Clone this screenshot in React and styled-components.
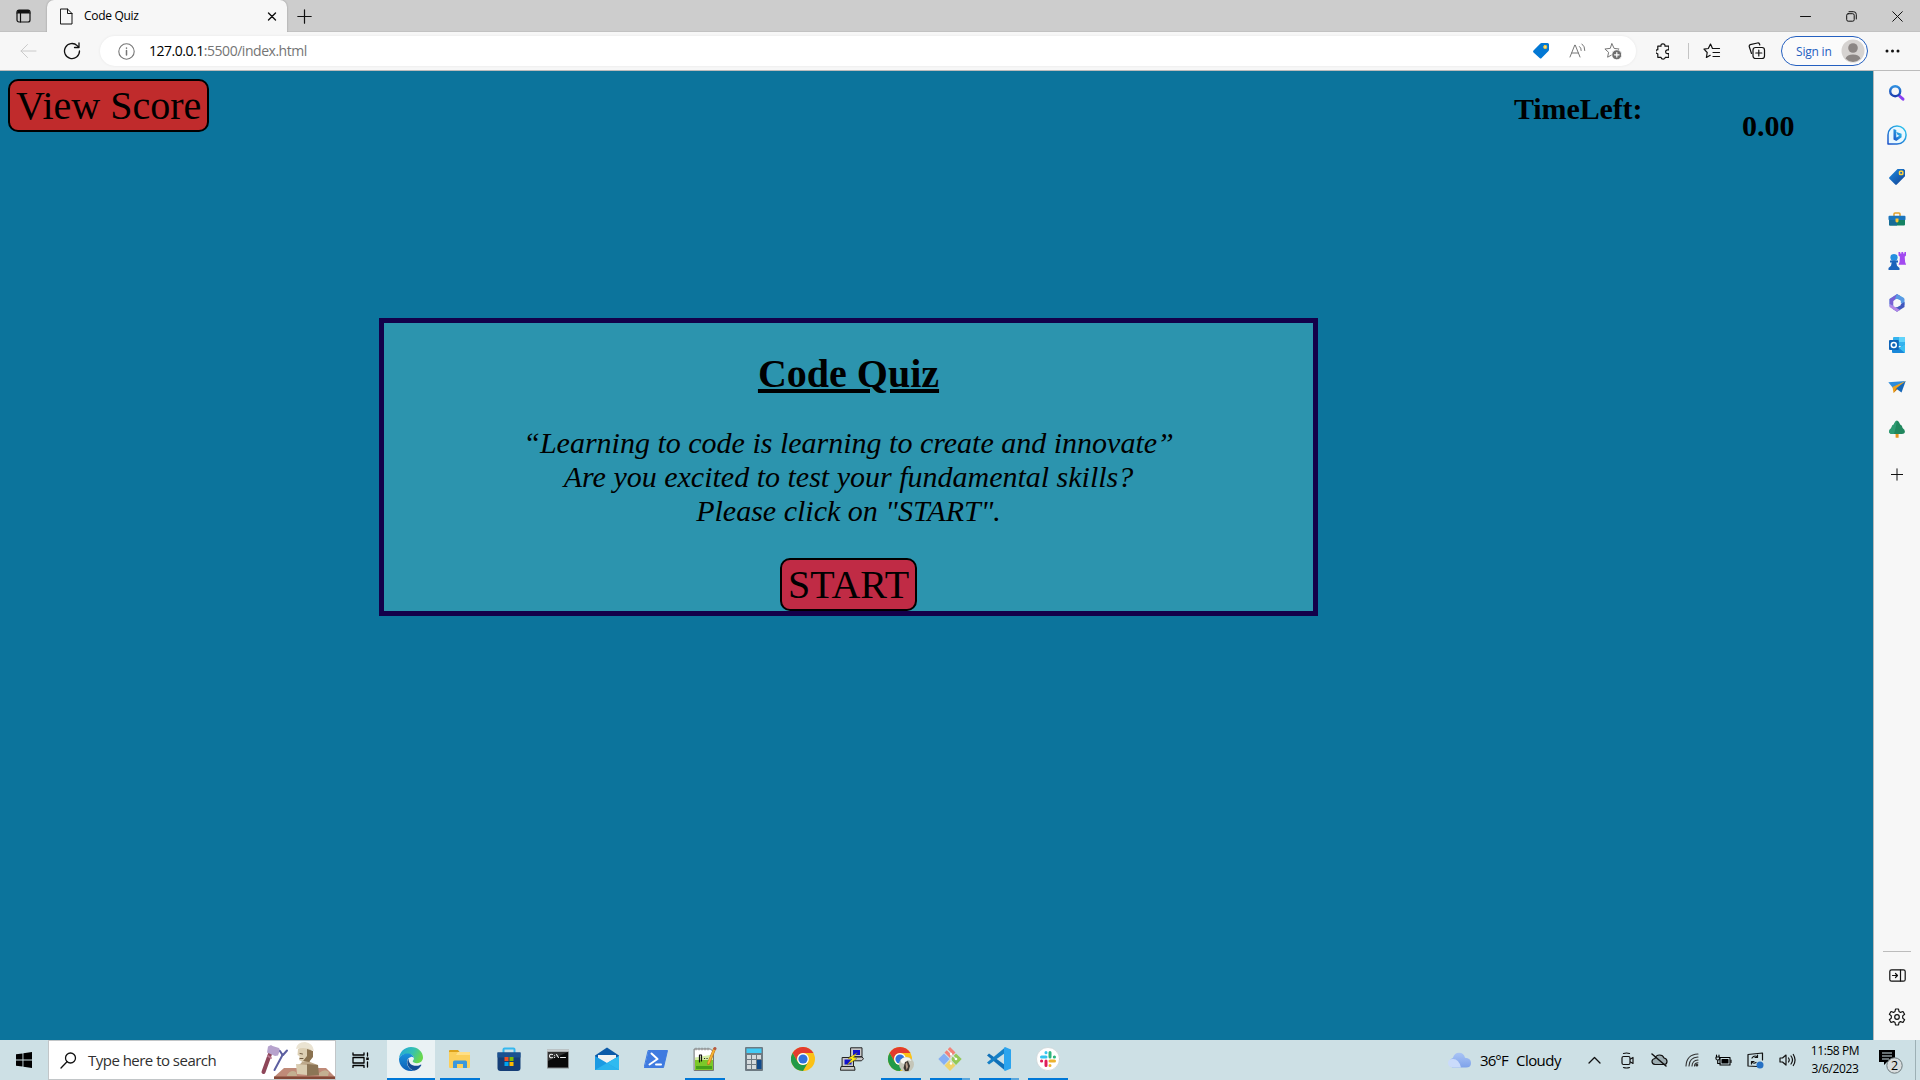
import React from 'react';
import styled, { createGlobalStyle } from 'styled-components';

const Global = createGlobalStyle`
  * { box-sizing: border-box; }
  html, body { margin: 0; padding: 0; overflow: hidden; }
  svg { display: block; flex: none; }
`;
const ui = `'Open Sans', 'Noto Sans', sans-serif`;
const serif = `'Liberation Serif', 'Times New Roman', serif`;

const Desktop = styled.div`
  width: 1920px; height: 1080px; display: flex; flex-direction: column;
  font-family: ${ui}; color: #000; background: #f7f7f7; overflow: hidden;
`;
const TabBar = styled.div`
  height: 32px; display: flex; background: #cdcdcd; flex: none;
  box-shadow: inset 0 -1px #c2c2c2;
`;
const Slot = styled.div`
  width: ${p => p.$w}px; height: ${p => p.$h ? p.$h + 'px' : '100%'};
  display: flex; align-items: center; justify-content: center; flex: none;
`;
const Tab = styled.div`
  width: 240px; height: 32px; background: #f7f7f7; border-radius: 7px 7px 0 0;
  display: flex; align-items: center; padding: 0 9px 0 13px; font-size: 12px;
  box-shadow: 0 0 2px rgba(0,0,0,.3); clip-path: inset(0 -3px 0 -3px);
`;
const TabTitle = styled.span`
  margin-left: 11px; flex: 1; letter-spacing: -0.3px; line-height: 16px; padding-bottom: 1px;
`;
const Spacer = styled.div`flex: 1;`;
const Toolbar = styled.div`
  height: 39px; display: flex; align-items: center; background: #f7f7f7; flex: none;
  border-bottom: 1px solid #bcbcbc; padding-left: 6px;
`;
const Address = styled.div`
  width: 1536px; height: 30px; border-radius: 15px; background: #fff; display: flex; align-items: center;
  padding: 0 5px 0 8px; margin-left: 6px; box-shadow: 0 0 3px rgba(0,0,0,.07);
`;
const Url = styled.span`
  flex: 1; margin-left: 5px; font-size: 14px; line-height: 20px; letter-spacing: -0.47px; color: #757575;
  b { color: #000; font-weight: 400; }
`;
const Divider = styled.div`width: 1px; height: 16px; background: #c4c4c4; margin-left: -1px;`;
const SignIn = styled.div`
  width: 87px; height: 30px; border: 1px solid #2560c0; border-radius: 15px; background: #fbfbfb;
  display: flex; align-items: center; justify-content: space-between; padding: 0 2px 0 14px;
  font-size: 12px; letter-spacing: -0.2px; color: #2560c0; margin-left: 2px;
`;
const Main = styled.div`height: 969px; display: flex; flex: none;`;
const Page = styled.div`
  width: 1873px; height: 969px; background: #0c749c; font-family: ${serif}; padding: 8px;
`;
const PageHeader = styled.div`display: flex; align-items: flex-start; height: 239px;`;
const RedButton = styled.button`
  font-family: ${serif}; font-size: 40px; line-height: 46px; height: 53px; padding: 2px 6px 1px;
  border: 2px solid #000; border-radius: 10px; color: #000; white-space: nowrap; width: ${p => p.$w}px;
  background: ${p => p.$bg}; display: block; flex: none;
`;
const TimeLabel = styled.div`
  font-size: 30px; font-weight: 700; line-height: 34px; margin: 13px 0 0 1305px; width: 128px; white-space: nowrap;
  letter-spacing: -0.12px;
`;
const TimeValue = styled.div`
  font-size: 30px; font-weight: 700; line-height: 34px; margin: 30px 0 0 100px;
`;
const Card = styled.div`
  width: 939px; height: 298px; margin-left: 371px; border: 5px solid #13004a; background: #2c94ae;
  display: flex; flex-direction: column; align-items: center; padding-top: 28px;
`;
const Title = styled.h1`
  margin: 0 0 29px; font-size: 40px; line-height: 46px; text-decoration: underline;
  text-decoration-thickness: 4px; text-underline-offset: 2px;
`;
const Quote = styled.p`
  margin: 0 0 30px; font-size: 30px; line-height: 34px; font-style: italic; text-align: center; white-space: nowrap;
`;
const Sidebar = styled.div`
  width: 47px; border-left: 1px solid #b9b9b9; display: flex; flex-direction: column; align-items: center;
  padding-top: 1px; background: #f7f7f7;
`;
const SideRule = styled.div`width: 28px; height: 1px; background: #bcbcbc;`;
const Taskbar = styled.div`
  height: 40px; display: flex; background: #cde0e5; flex: none; font-size: 15px;
`;
const Search = styled.div`
  width: 288px; height: 40px; border: 1px solid #c2c6c8; background: #fff; display: flex; align-items: center;
  padding-left: 11px; font-size: 15px; letter-spacing: -0.52px; color: #303030;
`;
const SearchText = styled.span`margin-left: 11px; flex: 1; white-space: nowrap; line-height: 20px;`;
const Apps = styled.div`display: flex; gap: 1px; margin-left: 3px;`;
const AppButton = styled.div`
  width: 48px; height: 40px; display: flex; flex-direction: column; align-items: center;
  background: ${p => p.$active ? '#eaf2f4' : 'transparent'};
`;
const Mark = styled.div`
  height: 2px; width: ${p => p.$line === 'full' ? 48 : 40}px;
  background: ${p => !p.$line ? 'transparent' : p.$line === 'stack' ? 'linear-gradient(90deg, #0078d7 32px, #5aa7dd 32px)' : '#0078d7'};
`;
const Weather = styled.div`
  display: flex; align-items: center; font-size: 15px; letter-spacing: -0.55px; white-space: nowrap; width: 133px;
  svg { margin-right: 9px; }
  span { width: 36px; letter-spacing: -0.9px; }
`;
const Clock = styled.div`
  width: 64px; font-size: 12px; line-height: 18px; text-align: center; letter-spacing: -0.4px; padding-top: 2px; white-space: nowrap;
`;
const ShowDesktop = styled.div`width: 5px; border-left: 1px solid #9db0b5;`;

const Svg = ({ w = 16, h, sw = 1, c = '#111', children }) => (
  <svg width={w} height={h || w} viewBox={`0 0 ${w} ${h || w}`} fill="none" stroke={c} strokeWidth={sw} strokeLinecap="round" strokeLinejoin="round">{children}</svg>
);

const Star = 'M8 .8l2.1 4.6 5 .6-3.7 3.3 1 4.9L8 11.8l-4.4 2.4 1-4.9L.9 6l5-.6z';

const sideIcons = [
  <Svg w={18} sw={0}>
    <path d="M11.500 12l3.500 3.200" stroke="#8a3ff0" strokeWidth="3" />
    <circle cx="7.200" cy="7.200" r="5" stroke="url(#sg)" strokeWidth="2.400" />
    <defs><linearGradient id="sg" x1="0" y1="0" x2="0" y2="1"><stop stopColor="#2f8fe0" /><stop offset="1" stopColor="#1b3fb0" /></linearGradient></defs>
  </Svg>,
  <Svg w={20} sw={0}>
    <defs><linearGradient id="bg" x1="1" y1="0" x2="0" y2="1"><stop stopColor="#2fd0f0" /><stop offset="1" stopColor="#1b4fc8" /></linearGradient></defs>
    <path d="M10 .9a9.1 9.1 0 1 1 0 18.200L1 19V10A9 9 0 0 1 10 .9z" fill="#e9f8ff" stroke="url(#bg)" strokeWidth="1.500" />
    <path d="M6.500 4l2.800 1v7.600l3.200-1.800-1.900-.9-1.200-3 5.200 1.900v3.400L9.300 16l-2.800-1.600z" fill="url(#bg)" />
  </Svg>,
  <Svg w={18} sw={0}>
    <defs><linearGradient id="tg" x1="0" y1="0" x2="1" y2="1"><stop stopColor="#1d8be0" /><stop offset="1" stopColor="#123f91" /></linearGradient></defs>
    <path d="M9.500 1h6.300L17 2.200v6l-8.200 8.400q-.8.8-1.600 0L1.400 10.800q-.8-.8 0-1.600z" fill="url(#tg)" />
    <rect x="11.500" y="3.200" width="3.300" height="3.300" rx=".8" stroke="#ffd23c" strokeWidth="1.500" />
  </Svg>,
  <Svg w={18} h={16} sw={0}>
    <path d="M6 5V3q0-1 1-1h4q1 0 1 1v2" stroke="#e3a12b" strokeWidth="1.500" />
    <rect x=".5" y="4.800" width="17" height="4.400" rx="1" fill="#1b75bd" />
    <path d="M1 9h16v4.500q0 1-1 1H2q-1 0-1-1z" fill="#138263" /><path d="M1 9h8v5.500H2q-1 0-1-1z" fill="#176c96" />
    <path d="M7.500 7.500h3v3L9 11.800l-1.500-1.300z" fill="#ffc531" />
  </Svg>,
  <Svg w={20} h={20} sw={0}>
    <path d="M11.500 1h1.700v1.500h1.200V1h1.800v1.500h1.200V1H19v3.500l-1.300 1.200.4 5.300 1 2.700h-7.500l1-2.700.3-5.300-1.400-1.200z" fill="#a24af0" />
    <circle cx="7" cy="6.500" r="3.600" fill="#258fe0" /><path d="M3 9.500h8v2H9.300l.7 3.300 2.500 2.200v2H1.500v-2L4 14.800l.7-3.300H3z" fill="#1c63bb" />
  </Svg>,
  <Svg w={18} sw={0}>
    <path d="M9 0l7 4v4.500l-3.800-2.200L9 4.500 5.500 6.800 5 14 1.500 12V5z" fill="#4faee4" />
    <path d="M1.500 5L9 .2l3 1.500-5.500 4L5.500 12l-4-2z" fill="#7a5fd4" />
    <path d="M9 .2l7.500 4.500V11l-4-2V6L7 4.500z" fill="#5a9ae4" />
    <path d="M16.500 8v5L9 17.700 4 14.500l5-1.500 4-3z" fill="#4257bd" />
    <path d="M1.500 10v3L9 17.800l3-1.800-6.500-4z" fill="#b184e6" />
    <path d="M9 5l3.700 2.100v4.100L9 13.300l-3.700-2.100V7.100z" fill="#f7f7f7" stroke="#f7f7f7" />
  </Svg>,
  <Svg w={18} sw={0}>
    <rect x="5" y="1" width="12" height="9" rx="1" fill="#35b3ee" /><path d="M11 1h6v5h-6z" fill="#61d4fb" />
    <path d="M4 8l6.500 4L17 8v8q0 1-1 1H5q-1 0-1-1z" fill="#1988d9" /><path d="M17 8v9l-6-5z" fill="#3bc0f2" />
    <rect x="1" y="4" width="9.800" height="10" rx="1" fill="#0f64b8" /><circle cx="5.800" cy="9" r="2.500" stroke="#fff" strokeWidth="1.500" />
  </Svg>,
  <Svg w={18} h={14} sw={0}>
    <path d="M.3 2.200L17.700 1 5 8z" fill="#2e8cdb" /><path d="M17.700 1L4.500 7l1 6z" fill="#f0a21c" />
    <path d="M17.700 1L8 8.500l5.500 4z" fill="#1667b8" /><path d="M8 8.500L5.500 13l3.600-3.700z" fill="#b96c12" />
  </Svg>,
  <Svg w={18} h={18} sw={0}>
    <rect x="7.600" y="12" width="3" height="5.800" rx=".5" fill="#e8951d" />
    <path d="M9 .5q2 .5 3.200 4 2.200 1 2.400 3.400Q17 9.500 17 12q-.5 2-3 2H4q-2.500 0-3-2 0-2.500 2.400-4.100Q3.600 5.500 5.800 4.500 7 1 9 .5z" fill="#21875e" />
    <path d="M9 .5q-2 .5-3.200 4Q3.600 5.500 3.400 7.900 1 9.500 1 12q.5 2 3 2h2Q8 7 9 .5z" fill="#2e9b73" />
  </Svg>,
];

const ChromeDisc = () => (
  <>
    <circle cx="12" cy="12" r="12" fill="#fbc116" />
    <path d="M1.600 6A12 12 0 0 1 22.400 6H12A6 6 0 0 0 6.800 15z" fill="#e33b2e" />
    <path d="M1.600 6A12 12 0 0 0 12 24l5.200-9A6 6 0 0 1 6.800 15z" fill="#229a48" />
    <circle cx="12" cy="12" r="5.900" fill="#fff" /><circle cx="12" cy="12" r="4.600" fill="#3272dc" />
  </>
);

const apps = [
  ['full', <Svg w={24} sw={0}>
    <defs>
      <linearGradient id="e1" x1="0" y1="0" x2="1" y2=".4"><stop stopColor="#22a5e0" /><stop offset=".6" stopColor="#35c1b0" /><stop offset="1" stopColor="#68d84e" /></linearGradient>
      <linearGradient id="e2" x1="0" y1="0" x2="0" y2="1"><stop stopColor="#1a92dc" /><stop offset="1" stopColor="#0e5eb5" /></linearGradient>
    </defs>
    <path d="M0 11.500C.5 5 5.500 0 12 0c7 0 12 5 12 10.500 0 3.500-2.800 5.700-6 5.700-2.500 0-4.300-.9-4.300-1.900 0-.6 1.200-1.200 1.200-3C14.900 8.500 12 7 8.500 7 4 7 1 9 0 11.500z" fill="url(#e1)" />
    <path d="M0 12C.5 9 4 6.500 8.500 6.500c3.500 0 6 2 6.400 4.500-1-1-2-1.300-3-1.100C8 10.500 6.500 16 9.500 20c1.500 2.200 3.500 3.500 5.500 3.700C6 25.500 0 19 0 12z" fill="url(#e2)" />
    <path d="M9.600 11.500C6.500 15 9 22 15 23.700c3.500-.8 6-3 7.300-5.500.2-.5-.2-.8-.7-.5-6 3-12.500 0-12-6.200z" fill="#124b94" />
  </Svg>],
  ['on', <Svg w={22} h={20} sw={0}>
    <path d="M0 2q0-1 1-1h8l2 2.500H0z" fill="#dda21a" /><rect y="3" width="21" height="16" rx="1" fill="#fbcf5b" /><path d="M9 3h11q1 0 1 1v2H7z" fill="#ffdf86" />
    <path d="M4 19v-6q0-1.500 1.500-1.500h11Q18 11.500 18 13v6h-4v-4H8v4z" fill="#3b98dc" />
  </Svg>],
  ['', <Svg w={24} sw={0}>
    <path d="M6.500 7V2.500Q6.500 1.500 7.500 1.500h9q1 0 1 1V7" stroke="#35b8ef" strokeWidth="2" /><path d="M.5 5.500h23V21q0 3-3 3h-17q-3 0-3-3z" fill="#153e77" />
    <path d="M.5 5.500h23v5H.5z" fill="#1b5190" />
    <rect x="7.500" y="10" width="4" height="4" fill="#f25022" /><rect x="12.500" y="10" width="4" height="4" fill="#7fba00" /><rect x="7.500" y="15" width="4" height="4" fill="#00a4ef" /><rect x="12.500" y="15" width="4" height="4" fill="#ffb900" />
  </Svg>],
  ['', <Svg w={24} h={20} sw={0}>
    <rect x="1" y=".5" width="22" height="19" fill="#8b8f92" /><rect x="2" y="3" width="20" height="15.500" fill="#0a0a0a" /><path d="M2 3h20L2 12z" fill="#333" /><path d="M1 .5h22v2H1z" fill="#c9cccd" />
    <path d="M6.500 5.500q-3-.8-3 1.500t3 1.500M8.500 6.200v.1M8.500 8.300v.1M10.500 5.500l2 3M14.500 8.500h5" stroke="#eee" strokeWidth="1.100" />
  </Svg>],
  ['', <Svg w={24} sw={0}>
    <path d="M0 8.500L12 .5l12 8v4H0z" fill="#0d5aa8" /><path d="M3 8h18v8H3z" fill="#f2f2f2" />
    <path d="M0 9l12 7 12-7v14H0z" fill="#1b9ae2" /><path d="M24 9v14L12 16z" fill="#2fbaf0" /><path d="M0 23l12-7 12 7z" fill="#32bdf2" opacity=".7" />
  </Svg>],
  ['', <Svg w={24} h={20} sw={0}>
    <path d="M4.500 1.500h19L19.500 18.500h-19z" fill="#3f7be0" stroke="#3f7be0" strokeWidth="1" /><path d="M7.500 4.500l6 5.500-8 5.500" stroke="#fff" strokeWidth="2" /><path d="M12 15.500h5" stroke="#fff" strokeWidth="2" />
  </Svg>],
  ['on', <Svg w={24} sw={0}>
    <path d="M1.500 2h16l3 3v18.500h-19z" fill="#fff" stroke="#777" strokeWidth="1" /><path d="M2 12h18v11H2z" fill="#7cc829" /><path d="M2 10.500l18-3v5.500H2z" fill="#d5efa6" />
    <path d="M3 19h16v3H3z" fill="#45a01a" /><path d="M6.500 8v7M6.500 8h2v6M11.500 11.500h.1M14 11.500h.1" stroke="#111" strokeWidth="1.200" />
    <path d="M3 1v2M6 1v2M9 1v2M12 1v2M15 1v2" stroke="#888" strokeWidth=".8" />
    <path d="M21.500 2l-6 14.500" stroke="#c47820" strokeWidth="3" /><path d="M21.500 2l-6 14" stroke="#f5b535" strokeWidth="1.800" /><path d="M22 1.500v.1" stroke="#b45745" strokeWidth="3" />
  </Svg>],
  ['', <Svg w={18} h={24} sw={0}>
    <rect width="18" height="24" rx="1" fill="#6d7a82" /><rect x="1.500" y="1.500" width="15" height="4.500" fill="#43cbf5" />
    {[0, 1, 2].map(r => [0, 1, 2].map(c => <rect key={r + '-' + c} x={2 + c * 5} y={8 + r * 5} width="4" height="4" fill="#d4dadd" />))}
    <rect x="12" y="13" width="4.500" height="9" fill="#114a8b" />
  </Svg>],
  ['', <Svg w={24} sw={0}><ChromeDisc /></Svg>],
  ['', <Svg w={24} sw={1}>
    <path d="M11 .8h11v9H11zM10 9.800h12l1.500 2-2 2H13zM2.500 10.500h11v9h-11zM1.500 19.500h13l.5 3.700H.7z" fill="#c8c8c8" stroke="#222" />
    <path d="M13 3h7v5h-7zM4.500 12.500h7v5h-7z" fill="#1111cc" stroke="none" /><path d="M17 6l-9 5.500 4 .5-5 6 10-6.500-3.500-1z" fill="#ffec17" stroke="#806e00" strokeWidth=".4" />
  </Svg>],
  ['on', <svg width="28" height="26" viewBox="-1 0 28 26">
    <g transform="translate(0 1)"><ChromeDisc /></g>
    <circle cx="18.500" cy="18.500" r="7.500" fill="#c4c5b8" /><path d="M12.500 14q3-4 9-2l2 3-4-1-3 4-3-1z" fill="#f6f6f0" /><path d="M15.500 22l1.500-6 3-1 2 5-1.500 5h-3.500z" fill="#3b352f" /><path d="M17.500 18l1.500-2 1 5-1.500 3z" fill="#b49b88" />
  </svg>],
  ['stack', <Svg w={24} sw={0}>
    <path d="M12 0l5.500 5.500L12 11 6.500 5.500z" fill="#f28279" /><path d="M6 6.500l5.500 5.500L6 18 .3 12z" fill="#86aff3" /><path d="M18 6.500l5.700 5.500L18 18l-5.500-6z" fill="#93c957" /><path d="M12 13l5.500 5.500L12 24l-5.500-5.500z" fill="#efd36b" />
    <path d="M9 2.500l4 4v9.500M13 7l5 5" stroke="#dfe7df" strokeWidth="1.200" /><circle cx="13" cy="7" r="1.200" fill="#fff" /><circle cx="18" cy="12" r="1.300" fill="#fff" /><circle cx="13" cy="16.500" r="1.200" fill="#fff" />
  </Svg>],
  ['stack', <Svg w={24} sw={0}>
    <path d="M0 8.500l2-2L18 18v5.500z" fill="#0f70b8" /><path d="M0 15.500l2 2L18 6V.5z" fill="#1580c6" /><path d="M18 0l6 2.500v19L18 24l-1-1V1z" fill="#2ba4ee" />
  </Svg>],
  ['on', <Svg w={24} sw={0}>
    <circle cx="12" cy="12" r="11.500" fill="#fff" stroke="#c6cbcc" strokeWidth=".6" />
    <g strokeWidth="3"><path d="M10 5.500v.2M5.500 10H10" stroke="#36c5f0" /><path d="M14 5.500V10M18.500 10h-.2" stroke="#2eb67d" /><path d="M5.500 14h.2M10 14v4.500" stroke="#e01e5a" /><path d="M14 14h4.500M14 18.400v.1" stroke="#ecb22e" /></g>
  </Svg>],
];

export default function App() {
  return (
    <Desktop>
      <Global />
      <TabBar>
        <Slot $w={47}><Svg w={15} h={14} sw={1.200}><rect x="1" y="1" width="13" height="12" rx="2" /><path d="M1 4h13M4.500 4v9" /><path d="M2 1.500h11v2H2z" fill="#111" /></Svg></Slot>
        <Tab>
          <Svg w={13} h={17}><path d="M.8 1h6.700L12 5.500V16H.8zM7.500 1v4.500H12" /></Svg>
          <TabTitle>Code Quiz</TabTitle>
          <Svg w={12} sw={1.400}><path d="M2.500 3l7 7M9.500 3l-7 7" /></Svg>
        </Tab>
        <Slot $w={35}><Svg w={15}><path d="M7.500 .8v13.400M.8 7.500h13.400" strokeWidth="1.200" /></Svg></Slot>
        <Spacer />
        <Slot $w={46}><Svg w={11}><path d="M.5 5.500h10" /></Svg></Slot>
        <Slot $w={46}><Svg w={11}><rect x=".7" y="2.700" width="7.500" height="7.500" rx="1.500" /><path d="M3 .7h4.500q2.800 0 2.800 2.800V8" /></Svg></Slot>
        <Slot $w={46}><Svg w={11}><path d="M.7 .7l9.600 9.600M10.300 .7L.7 10.300" /></Svg></Slot>
      </TabBar>
      <Toolbar>
        <Slot $w={44}><Svg w={17} c="#cacaca"><path d="M16 8H1M7.500 1.500L1 8l6.500 6.500" /></Svg></Slot>
        <Slot $w={44}><Svg w={18} sw={1.300}><path d="M16.500 9A7.500 7.500 0 1 1 14.200 3.600L16 5.400M16 1v4.500h-4.500" /></Svg></Slot>
        <Address>
          <Slot $w={36}><Svg w={17} c="#767676" sw={1.100}><circle cx="8.500" cy="8.500" r="7.700" /><path d="M8.500 7.500v4.500M8.500 5v.2" strokeWidth="1.500" /></Svg></Slot>
          <Url><b>127.0.0.1</b>:5500/index.html</Url>
          <Slot $w={36}><Svg w={18} sw={0}><path d="M9.500 1h6q1.500 0 1.500 1.500v5.300q0 .6-.5 1.100l-6.900 7.200q-1 1-2 0L1.500 10.500q-1-1 0-2L8.400 1.500Q9 1 9.500 1z" fill="#0378d4" /><rect x="11.800" y="3.600" width="2.800" height="2.800" rx=".6" fill="#f0e19a" stroke="#f7c331" strokeWidth="1" /></Svg></Slot>
          <Slot $w={36}><Svg w={17} h={16} c="#767676"><path d="M1 14L5.800 2h.4L11 14M2.600 10h6.800M10.500 3.500q1.800 1.200 1.700 4M13 1q3 2.200 2.800 6.500" /></Svg></Slot>
          <Slot $w={36}><Svg w={18} h={17} c="#767676"><path d={Star} /><circle cx="12.800" cy="11.800" r="5" fill="#6e6e6e" stroke="#fff" strokeWidth=".8" /><path d="M10.500 11.800h4.600M12.800 9.500v4.600" stroke="#fff" strokeWidth="1.200" /></Svg></Slot>
        </Address>
        <Slot $w={53}><Svg w={13} h={17} sw={1.200}><path d="M1.200 3.200h3.200q-.3-2.400 1.900-2.400T8.400 3.200h3.800v3.600h-1.500q-1.700.2-1.700 1.900t1.700 1.900h1.500v3.700H8.700q-.2 1.900-2.100 1.900t-2.200-1.900H1.200v-3.500q-2.200-.2-2.200-2.100T1.200 6.700z" transform="translate(.6 0)" /></Svg></Slot>
        <Divider />
        <Slot $w={46}><Svg w={18} h={16} sw={1.200}><path d="M10 5.500H9.500L7.500 1 5.300 5.500 1 6.200l3.200 3.300-.8 5 3.800-2.200M10.500 5.500h6M10 9.500h6.500M10 13.500h6.500" /></Svg></Slot>
        <Slot $w={44}><Svg w={18} h={18} sw={1.200}><path d="M3.500 11.500L1.200 4.500Q1 3 2.200 2.600L9.500 1Q11 .8 11.500 2l.3 1" /><rect x="5" y="5.500" width="11.500" height="11" rx="2.500" /><path d="M10.800 8v6M7.800 11h6" /></Svg></Slot>
        <SignIn>Sign in<Svg w={24} sw={0}><circle cx="12" cy="12" r="11.500" fill="#d6d3d1" /><circle cx="12" cy="9" r="4.800" fill="#8b8684" /><path d="M4.500 19.500q1.500-4 7.500-4t7.500 4A11 11 0 0 1 12 23a11 11 0 0 1-7.500-3.500z" fill="#8b8684" /></Svg></SignIn>
        <Slot $w={48}><Svg w={15} h={4} sw={0}><circle cx="2" cy="2" r="1.500" fill="#111" /><circle cx="7.500" cy="2" r="1.500" fill="#111" /><circle cx="13" cy="2" r="1.500" fill="#111" /></Svg></Slot>
      </Toolbar>
      <Main>
        <Page>
          <PageHeader>
            <RedButton $w={201} $bg="#c02b2c">View Score</RedButton>
            <TimeLabel>TimeLeft:</TimeLabel>
            <TimeValue>0.00</TimeValue>
          </PageHeader>
          <Card>
            <Title>Code Quiz</Title>
            <Quote>“Learning to code is learning to create and innovate”<br />Are you excited to test your fundamental skills?<br />Please click on "START".</Quote>
            <RedButton $w={137} $bg="#c02b45">START</RedButton>
          </Card>
        </Page>
        <Sidebar>
          {sideIcons.map((icon, i) => <Slot key={i} $w={46} $h={42}>{icon}</Slot>)}
          <Slot $w={46} $h={48}><Svg w={12} h={13}><path d="M6 .8v11.400M.3 6.500h11.400" /></Svg></Slot>
          <Spacer />
          <SideRule />
          <Slot $w={46} $h={46}><Svg w={17} h={13} sw={1.200}><rect x=".8" y=".8" width="15.400" height="11.400" rx="1.800" /><path d="M11.500 1v11M3.500 6.500h5M6.500 4.500l2 2-2 2" /></Svg></Slot>
          <Slot $w={46} $h={38}><Svg w={18} sw={1.200}><path d="M7.500 1h3l.5 2.500 1.500.9 2.500-.9 1.600 2.700-1.900 1.700v2.200l1.900 1.700-1.600 2.700-2.500-.9-1.500.9-.5 2.500h-3L7 14.500l-1.500-.9-2.500.9-1.600-2.700 1.900-1.700V7.900L1.400 6.200 3 3.500l2.500.9L7 3.500z" /><circle cx="9" cy="9" r="2.300" /></Svg></Slot>
          <Slot $w={46} $h={4} />
        </Sidebar>
      </Main>
      <Taskbar>
        <Slot $w={48}><Svg w={16} sw={0}><path d="M0 2.300l6.500-.9v6.100H0zM7.400 1.300L16 0v7.500H7.400zM0 8.500h6.500v6.100L0 13.700zM7.400 8.500H16V16l-8.600-1.200z" fill="#000" /></Svg></Slot>
        <Search>
          <Svg w={17} sw={1.300}><circle cx="10.500" cy="6" r="5" /><path d="M7 9.800L1 16" /></Svg>
          <SearchText>Type here to search</SearchText>
          <Svg w={76} h={38} sw={0}>
            <path d="M11 13L4.500 31" stroke="#8e4659" strokeWidth="4" /><path d="M9 15l3 2" stroke="#b97891" strokeWidth="2" />
            <path d="M9 5.500l3-1.500 1.500 1 6.500 2 1 2-2 5.500-3 .5-8-3.500z" fill="#b7a3cd" />
            <path d="M15.500 29l8-15" stroke="#5c5fa0" strokeWidth="2" /><path d="M23.500 14l-2.500-4M24 14l4-4.500" stroke="#5c5fa0" strokeWidth="2" />
            <path d="M25 27h42l9 9H15z" fill="#bf8a78" /><path d="M15 35.500h61V38H15z" fill="#844837" />
            <path d="M42 16h9v5q5 2 8 3l-2 8H40l-2-8q5-1 5-4z" fill="#bda88a" />
            <path d="M39 8q5-4 13-1l1 7-3 6-6 1-4-2 .5-4-2-1z" fill="#dccfb4" />
            <path d="M48 8l6 2v6l-4 5-6-1 4-5z" fill="#8a7250" /><path d="M37 8q1-7 9-7 8 1 9 9-8-5-18-2z" fill="#eae3d2" />
            <path d="M48 23l11 1 1 10-12 1z" fill="#8c7556" /><path d="M37 23l11 1v10l-10-1z" fill="#d9ccb0" />
            <path d="M28 34q4-6 9-3l1 4H28zM60 32q6-5 10-1l-1 4h-9z" fill="#c3af91" />
            <path d="M41 12.500l2.500.5M41 17.500h3" stroke="#6d5840" strokeWidth="1" />
          </Svg>
        </Search>
        <Slot $w={48}><Svg w={17} h={16} sw={1.300} c="#000"><path d="M1 1v2h11V1M1 5.500h11v5.500H1zM1 15.500v-2h11v2M15.500 1v3M15.500 10v5" /><path d="M15.500 5.500v2.500" strokeWidth="2.500" strokeLinecap="butt" /></Svg></Slot>
        <Apps>
          {apps.map(([line, icon], i) => (
            <AppButton key={i} $active={i === 0}>
              <Slot $w={48} $h={38}>{icon}</Slot>
              <Mark $line={line} />
            </AppButton>
          ))}
        </Apps>
        <Spacer />
        <Weather>
          <Svg w={24} h={17} sw={0}><defs><linearGradient id="cl" x1="0" y1="0" x2="0" y2="1"><stop stopColor="#a9c4f5" /><stop offset="1" stopColor="#7ea2ea" /></linearGradient></defs><path d="M5.500 15.500a5 5 0 0 1 .3-9.500Q7.500 .8 12 .8q4.800 0 6 5 6 .5 6 5.200 0 4.500-5 4.500z" fill="url(#cl)" /><path d="M6 15.500Q1 15 1 11t5-4q6 0 8 8.500z" fill="#cadbfb" /></Svg>
          <span>36°F</span>Cloudy
        </Weather>
        <Slot $w={28}><Svg w={13} h={8} sw={1.300}><path d="M1 7l5.500-5.500L12 7" /></Svg></Slot>
        <Slot $w={38}><Svg w={13} h={17} sw={1.200}><rect x="1" y="4.500" width="8" height="8" rx="1.500" /><path d="M9.500 7l2.500-1.500v6L9.500 10M2.500 1.500q3-1 6 0M2.500 15.500q3 1 6 0" /></Svg></Slot>
        <Slot $w={27}><Svg w={17} h={14} sw={1.200}><path d="M4 11.500q-3-.5-3-3t3-3Q5 2 8.500 2t4.500 3q3 .5 3 3.500t-3 3z" fill="#9dadb1" /><path d="M1 1l14 12" strokeWidth="1.500" /></Svg></Slot>
        <Slot $w={38}><Svg w={14} h={14} sw={1.100} c="#333"><path d="M1 13Q1.500 1.500 13 1M4 13q.3-8.500 9-9M7 13q.2-5.500 6-6M9.500 13q0-3 3.500-3.200" /><circle cx="11.800" cy="12" r="1" fill="#111" /></Svg></Slot>
        <Slot $w={25}><Svg w={17} h={13} sw={1.100} c="#000"><rect x="5" y="3.500" width="10" height="7.500" /><path d="M7 5.500h6V9H7z" fill="#000" /><path d="M16 6v2.500M1.500 1v2M4 1v2M1 3h3.500v2q0 1-1.700 1T1 5zM2.700 6v3.500H5" /></Svg></Slot>
        <Slot $w={38}><Svg w={17} h={17} sw={1.200}><path d="M10 14.500l-9-.5V2.500L15.500 1v7" /><path d="M5 6q2-3 5-1.500M10.500 3v2.500H8M9 10.500q-2.500 1.500-4-.5M4.500 12V9.500H7" /><circle cx="13" cy="13" r="3.500" fill="#2671c4" stroke="none" /></Svg></Slot>
        <Slot $w={27}><Svg w={17} h={14} sw={1.200}><path d="M1 5v4h2.500L7 12V2L3.500 5zM9.500 5q1.500 2 0 4M12 3q3 4 0 8M14.300 1.500q3.500 5.500 0 11" /></Svg></Slot>
        <Slot $w={2} />
        <Clock>11:58 PM<br />3/6/2023</Clock>
        <Slot $w={48}><svg width="26" height="28" viewBox="0 0 26 28"><path d="M1 4h16v12H9l-3 3v-3H1z" fill="#000" /><path d="M4 7h10M4 10h10M4 13h7" stroke="#cde0e5" /><circle cx="16.500" cy="19.500" r="7.700" fill="#d7dcdd" stroke="#6e7a7d" /><text x="16.500" y="24" fontFamily="Open Sans, sans-serif" fontSize="12.500" textAnchor="middle">2</text></svg></Slot>
        <ShowDesktop />
      </Taskbar>
    </Desktop>
  );
}
